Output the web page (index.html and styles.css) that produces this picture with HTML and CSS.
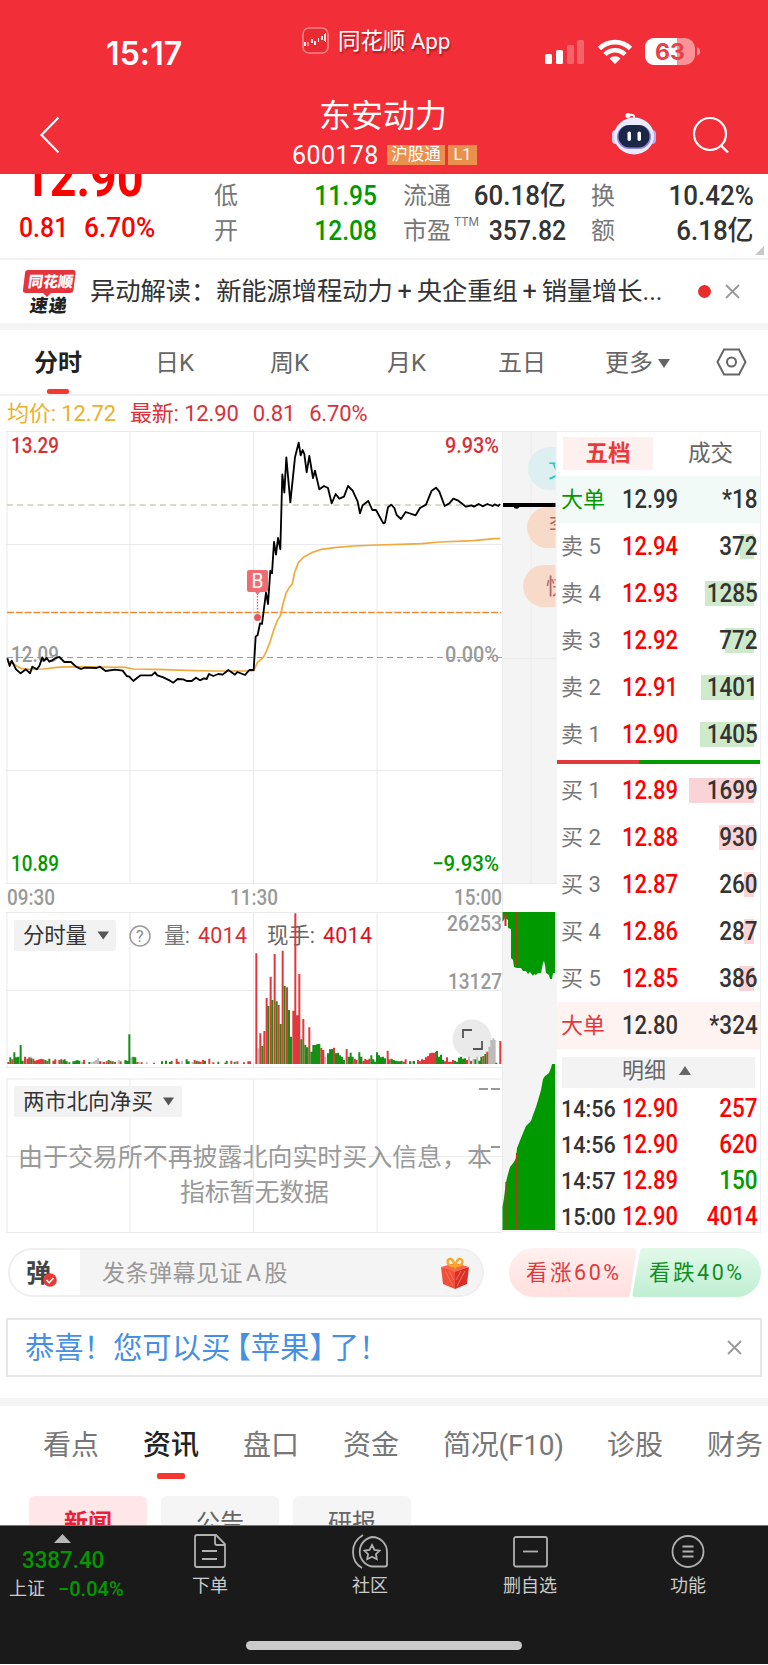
FILE: index.html
```html
<!DOCTYPE html>
<html lang="zh-CN">
<head>
<meta charset="utf-8">
<title>东安动力 600178</title>
<link rel="stylesheet" href="styles.css">
</head>
<body>
<div class="phone">
  <header class="top">
    <div class="status">
      <div class="clock">15:17</div>
      <div class="app">
        <svg width="27" height="27" viewBox="0 0 27 27"><rect x="1" y="1" width="25" height="25" rx="6" fill="#e82a33" stroke="#fa8286" stroke-width="1.6"/><g stroke="#fff" stroke-width="1.8"><path d="M3 15v4M10 12v4M13 14v4M20 9v4"/></g><g fill="none" stroke="#fff" stroke-width=".9"><path d="M6 15v4M16.500 11v4M23.500 6v9M22.600 7v7"/></g></svg>
        <span>同花顺 App</span>
      </div>
      <svg class="signals" width="158" height="30" viewBox="544 37 158 30">
        <rect x="545" y="54" width="7" height="10" rx="1.500" fill="#fff"/><rect x="556" y="50" width="7" height="14" rx="1.500" fill="#fff"/>
        <rect x="567" y="45" width="7" height="19" rx="1.500" fill="#fff" opacity=".25"/><rect x="577" y="40" width="7" height="24" rx="1.500" fill="#fff" opacity=".25"/>
        <g fill="none" stroke="#fff" stroke-width="4.600"><path d="M599.500 48.500a22 22 0 0 1 31 0M605 54.500a14 14 0 0 1 20 0"/></g><path d="M615 64l-5.500-5.500a7.800 7.800 0 0 1 11 0z" fill="#fff"/>
        <path d="M654 38h31a10 10 0 0 1 10 10v7a10 10 0 0 1-10 10h-31a9 9 0 0 1-9-9v-9a9 9 0 0 1 9-9z" fill="#fa9297"/>
        <path d="M677 38h-23a9 9 0 0 0-9 9v9a9 9 0 0 0 9 9h23z" fill="#fff"/><path d="M697 47.500q3 .5 3 4t-3 4z" fill="#fa9297"/>
        <text x="655" y="60" class="batt" textLength="30" lengthAdjust="spacingAndGlyphs">63</text>
      </svg>
    </div>
    <div class="titlebar">
      <svg class="back" width="22" height="38" viewBox="0 0 22 38"><path d="M19.500 1.500L2.500 19l17 17.500" fill="none" stroke="#fff" stroke-width="2.200"/></svg>
      <div class="stock">
        <h1>东安动力</h1>
        <div class="code"><span class="num">600178</span><span class="tag">沪股通</span><span class="tag tag-s">L1</span></div>
      </div>
      <svg class="robot" width="46" height="44" viewBox="0 0 46 44">
        <path d="M23 7V4q-1-2-5-1" fill="none" stroke="#fff" stroke-width="2"/><circle cx="17" cy="3.500" r="2.500" fill="#fff"/>
        <rect x="1" y="18" width="8" height="14" rx="4" fill="#cbd0fa"/><rect x="37" y="18" width="8" height="14" rx="4" fill="#bda6f4"/>
        <ellipse cx="23" cy="24" rx="20" ry="18.500" fill="#e9ecff"/><rect x="6" y="13" width="34" height="24" rx="12" fill="#9186e0"/><rect x="7.500" y="13" width="31" height="22.500" rx="11" fill="#1c2748"/>
        <rect x="16.500" y="19.500" width="3.500" height="9.500" rx="1.700" fill="#fff"/><rect x="26.500" y="19.500" width="3.500" height="9.500" rx="1.700" fill="#fff"/>
      </svg>
      <svg class="search" width="38" height="38" viewBox="0 0 38 38"><circle cx="18" cy="18" r="16" fill="none" stroke="#fff" stroke-width="2.200"/><path d="M29 29.500l7 7" stroke="#fff" stroke-width="2.400"/></svg>
    </div>
  </header>

  <section class="quote">
    <div class="now"><span class="price din">12.90</span><div class="chg"><span class="din">0.81</span><span class="din">6.70%</span></div></div>
    <dl class="facts">
      <dt>低</dt><dd class="down"><span class="din r">11.95</span></dd><dt>流通</dt><dd><span class="din r w">60.18亿</span></dd><dt>换</dt><dd><span class="din r w">10.42%</span></dd>
      <dt>开</dt><dd class="down"><span class="din r">12.08</span></dd><dt>市盈<sup>TTM</sup></dt><dd><span class="din r m">357.82</span></dd><dt>额</dt><dd><span class="din r w">6.18亿</span></dd>
    </dl>
    <svg class="corner" width="9" height="9" viewBox="0 0 9 9"><path d="M9 0v9H0z" fill="#c8c8c8"/></svg>
  </section>

  <section class="news">
    <svg width="54" height="46" viewBox="0 0 54 46"><path d="M5 1h46q3 0 2.500 3l-2 17q-.5 3-3.500 3H29l-4 4-4-4H4q-3.500 0-3-3L3 4q.3-3 3-3z" fill="#e4353c"/><g transform="skewX(-8)" class="express"><text x="8" y="18" fill="#fff" font-size="15" textLength="45">同花顺</text><text x="13" y="43" fill="#222" font-size="18" textLength="37">速递</text></g></svg>
    <p>异动解读：新能源增程动力<b>+</b>央企重组<b>+</b>销量增长...</p>
    <i class="dot"></i>
    <svg width="15" height="15" viewBox="0 0 15 15"><path d="M1 1l13 13M14 1L1 14" stroke="#999" stroke-width="1.800"/></svg>
  </section>

  <nav class="periods">
    <span class="on">分时</span><span>日K</span><span>周K</span><span>月K</span><span>五日</span>
    <span>更多<svg width="12" height="9" viewBox="0 0 12 9"><path d="M0 0h12L6 9z" fill="#666"/></svg></span>
    <svg width="31" height="28" viewBox="0 0 31 28"><path d="M8 1.500h15L29.500 14 23 26.500H8L1.500 14z" fill="none" stroke="#666" stroke-width="2"/><circle cx="15.500" cy="14" r="4.500" fill="none" stroke="#666" stroke-width="2"/></svg>
  </nav>

  <div class="legend"><span class="avg">均价: 12.72</span><span>最新: 12.90</span><span>0.81</span><span>6.70%</span></div>

  <main class="board">
    <svg class="charts" width="557" height="803" viewBox="0 431 557 803">
      <defs><clipPath id="strip"><rect x="502" y="431" width="53.500" height="453"/></clipPath></defs>
      <path d="M502.500 431H557V884h-54.500zM502.500 912H557v320h-54.500z" fill="#f4f4f4"/>
      <path d="M6 431.500h551M6 544.500h496M6 770.500h496M6 883.500h551M6 912.500h496M6 990.500h496M6 1067.500h496M6 1079h496M6 1156.500h496M6 1232.500h496M7 431v452M130 431v452M253.500 431v452M377 431v452M7 912v155M130 912v155M253.500 912v155M377 912v155M7 1079v153M130 1079v153M253.500 1079v153M377 1079v153" stroke="#eaeaea" fill="none"/>
      <path d="M502.500 431v801M531 431v452M503 658.500h53" stroke="#ececec" fill="none"/>
      <g clip-path="url(#strip)" class="bub">
        <rect x="528" y="447" width="70" height="43" rx="21.500" fill="#ddeff0"/><text x="548" y="477" fill="#22cfc5">文</text>
        <rect x="527" y="507" width="70" height="41" rx="20.500" fill="#f8dac8"/><text x="549" y="533" fill="#b26464">李</text>
        <rect x="523" y="565" width="70" height="42" rx="21" fill="#f8dac8"/><text x="546" y="594" fill="#b26464">快</text>
      </g>
      <path d="M7 505h494" stroke="#d0cdb8" stroke-width="1.300" stroke-dasharray="6 4.200"/>
      <path d="M7 612.500h494" stroke="#f18a35" stroke-width="1.700" stroke-dasharray="7 1.800"/>
      <path d="M7 657.500h495" stroke="#9a9a9a" stroke-width="1.200" stroke-dasharray="6 4"/>
      <g class="lab">
        <text x="11" y="452.500" fill="#d93038" textLength="48" lengthAdjust="spacingAndGlyphs">13.29</text><text x="11" y="661.500" fill="#999" textLength="48" lengthAdjust="spacingAndGlyphs">12.09</text><text x="11" y="871" fill="#090" textLength="48" lengthAdjust="spacingAndGlyphs">10.89</text>
        <text x="445" y="452.500" fill="#d93038" textLength="54" lengthAdjust="spacingAndGlyphs">9.93%</text><text x="445" y="661.500" fill="#999" textLength="54" lengthAdjust="spacingAndGlyphs">0.00%</text><text x="432" y="871" fill="#090" textLength="67" lengthAdjust="spacingAndGlyphs">−9.93%</text>
        <g fill="#999"><text x="7" y="905" textLength="48" lengthAdjust="spacingAndGlyphs">09:30</text><text x="230" y="905" textLength="48" lengthAdjust="spacingAndGlyphs">11:30</text><text x="454" y="905" textLength="48" lengthAdjust="spacingAndGlyphs">15:00</text></g>
      </g>
      <g transform="translate(0 420) scale(.33333)" fill="none" stroke-linejoin="round">
        <path stroke="#f0a93d" stroke-width="5" d="M22 725L38 728 50 738 62 745 90 748 130 747 170 742 220 740 300 741 375 742 400 747 470 748 560 751 640 753 735 753 761 752 772 728 790 712 800 692 812 660 822 628 832 602 842 585 848 555 858 520 868 502 877 492 883 460 895 428 910 412 935 398 965 388 1010 382 1060 378 1130 375 1200 373 1265 371 1320 366 1420 362 1460 358 1480 356 1500 356"/>
        <path stroke="#000" stroke-width="5.500" d="M22 715L29 738 35 722 48 748 62 760 78 748 90 760 97 740 110 748 118 738 127 712 132 722 140 714 148 725 155 722 165 715 178 711 193 726 213 726 228 740 243 747 255 743 290 744 300 740 317 753 345 749 368 752 380 768 388 770 400 783 410 775 422 766 455 766 465 757 472 766 490 772 510 782 520 788 533 777 550 778 560 783 575 783 588 773 600 781 612 775 620 777 627 762 640 768 655 762 668 764 685 750 705 764 712 756 735 765 748 750 761 750L767 650 773 645 780 610 786 612 792 565 798 518 804 552 811 452 816 460 822 366 828 404 834 354 841 388 847 163 853 218 859 112 871 247 885 112 896 68 902 106 908 90 913 102 920 157 928 108 939 174 945 152 958 208 972 198 984 204 995 250 1007 222 1018 236 1032 230 1044 198 1058 212 1073 245 1080 280 1088 256 1105 243 1117 270 1128 270 1150 310 1155 308 1164 262 1174 254 1183 264 1190 285 1203 297 1217 276 1247 286 1260 264 1278 254 1295 212 1308 203 1318 215 1334 258 1348 250 1360 236 1375 242 1398 260 1415 256 1422 260 1436 252 1448 259 1462 252 1478 258 1484 253 1495 258 1500 252"/>
      </g>
      <path d="M503 505h52.500" stroke="#000" stroke-width="4"/><circle cx="516.500" cy="506" r="2.800"/>
      <path d="M257.500 593v21" stroke="#e0606a" stroke-width="1.300" stroke-dasharray="1.500 1.500"/><circle cx="257.500" cy="617.500" r="3.500" fill="#e85560"/>
      <path d="M249 570h17q2 0 2 2v18q0 2-2 2h-6l-2.500 3-2.500-3h-6q-2 0-2-2v-18q0-2 2-2z" fill="#ef6d70"/><text x="251.500" y="588" class="bmark" textLength="12" lengthAdjust="spacingAndGlyphs">B</text>

      <rect x="14" y="920" width="102" height="31" rx="2" fill="#f2f2f2"/><text x="23" y="943" class="sel" textLength="64">分时量</text><path d="M97.500 931.500h11.500l-5.750 8z" fill="#555"/>
      <circle cx="140" cy="936" r="10" fill="none" stroke="#999" stroke-width="1.500"/><text x="136" y="942" class="q">?</text>
      <g class="vh"><text x="164" y="943" fill="#777" textLength="26">量:</text><text x="198" y="943" fill="#d93038" textLength="49">4014</text><text x="267" y="943" fill="#666" textLength="48">现手:</text><text x="323" y="943" fill="#e01020" textLength="49">4014</text></g>
      <g class="lab" fill="#999"><text x="447" y="930.500" textLength="55" lengthAdjust="spacingAndGlyphs">26253</text><text x="448" y="988.500" textLength="54" lengthAdjust="spacingAndGlyphs">13127</text></g>
      <circle cx="472" cy="1039" r="19.500" fill="#e6e6e6" opacity=".85"/><path d="M463 1038v-8h9M482 1041v8h-9" fill="none" stroke="#555" stroke-width="1.800"/>

      <g transform="translate(0 870) scale(.33333)" fill="none" stroke-width="6">
        <path stroke="#bbb" d="M92 582V560M246 582V576M275 582V576M282 582V574M288 582V570M294 582V565M306 582V574M356 582V570M394 582V562M418 582V575M440 582V577M546 582V574M578 582V576M775 582V535M976 582V560M1236 582V574M1267 582V566M1407 582V560M1420 582V566M1432 582V560M1468 582V530M1474 582V510M1480 582V505M1484 582V510"/>
        <path stroke="#e2383c" d="M25 582V576M37 582V568M75 582V560M82 582V566M88 582V562M100 582V566M106 582V572M112 582V570M118 582V568M124 582V566M130 582V568M142 582V572M160 582V572M166 582V568M178 582V570M190 582V570M252 582V570M300 582V574M312 582V576M320 582V574M332 582V572M345 582V576M362 582V574M412 582V576M425 582V577M462 582V578M515 582V572M530 582V566M536 582V575M584 582V570M596 582V574M602 582V575M609 582V570M628 582V566M640 582V577M676 582V578M694 582V572M712 582V574M732 582V577M745 582V574M750 582V574M769 582V250M781 582V490M793 582V483M800 582V384M812 582V320M824 582V252M836 582V405M848 582V242M861 582V352M880 582V422M886 582V130M892 582V436M898 582V312M910 582V447M928 582V472M964 582V534M970 582V540M1002 582V533M1040 582V537M1064 582V566M1070 582V570M1090 582V572M1096 582V566M1102 582V570M1108 582V566M1163 582V542M1169 582V568M1211 582V575M1217 582V568M1254 582V570M1260 582V574M1266 582V568M1272 582V570M1278 582V562M1284 582V558M1290 582V550M1296 582V548M1302 582V548M1308 582V546M1335 582V574M1341 582V562M1347 582V575M1353 582V575M1359 582V570M1401 582V570M1413 582V572M1450 582V558M1462 582V545M1501 582V513"/>
        <path stroke="#149014" d="M31 582V562M43 582V547M49 582V562M55 582V560M62 582V525M68 582V572M94 582V565M136 582V570M148 582V566M184 582V568M194 582V568M200 582V574M208 582V577M220 582V574M226 582V572M232 582V570M238 582V572M268 582V576M326 582V570M338 582V574M376 582V570M382 582V572M388 582V493M400 582V560M406 582V562M486 582V574M498 582V572M510 582V576M560 582V568M566 582V574M590 582V572M615 582V572M655 582V575M680 582V572M704 582V575M787 582V528M805 582V408M817 582V390M830 582V394M842 582V462M854 582V348M867 582V420M873 582V500M904 582V508M916 582V524M922 582V532M934 582V545M940 582V525M946 582V525M952 582V522M958 582V522M984 582V550M990 582V538M996 582V537M1008 582V550M1014 582V548M1020 582V556M1026 582V560M1032 582V570M1046 582V560M1052 582V548M1058 582V560M1078 582V547M1084 582V560M1114 582V556M1120 582V568M1126 582V575M1131 582V547M1137 582V556M1143 582V562M1149 582V560M1155 582V565M1175 582V566M1181 582V570M1187 582V572M1193 582V574M1199 582V574M1205 582V572M1230 582V574M1242 582V573M1311 582V543M1317 582V560M1323 582V554M1329 582V570M1365 582V572M1371 582V575M1377 582V563M1383 582V560M1389 582V566M1395 582V565M1426 582V568M1438 582V572M1444 582V560M1456 582V552M1489 582V578"/>
      </g>
      <path d="M502.500 912H555V973L553 973 552 979 550 979 549 975 546 973 545 965 544 961 543 963 541 973 538 973 536 975 534 974 533 976 530 972 528 974 526 971 523 971 521 968 517 968 514 967 513 960 511 958 511 929 508 928 508 920 505 918 502.500 922z" fill="#090"/>
      <path d="M502.500 1230V1207L504 1198 506 1182 508 1174 510 1167 514 1162 516 1158 517 1148 521 1138 523 1133 526 1126 531 1121 533 1115 536 1107 539 1097 541 1090 543 1079 545 1076 549 1073 551 1068 552 1064H555V1230z" fill="#090"/>
      <path d="M516.500 912v53M516.500 1230v-77M506 1230v-48" stroke="#b33c18" stroke-width="1.200"/><path d="M505.500 914v12" stroke="#e22" stroke-width="2"/>

      <rect x="14" y="1086" width="168" height="31" rx="2" fill="#f2f2f2"/><text x="23" y="1109" class="sel" textLength="130">两市北向净买</text><path d="M163 1097.500h11l-5.500 8z" fill="#555"/>
      <path d="M479 1089h9M491 1089h9M491 1147h9" stroke="#999" stroke-width="2"/>
      <g class="note"><text x="18" y="1166" textLength="474">由于交易所不再披露北向实时买入信息，本</text><text x="180" y="1201" textLength="149">指标暂无数据</text></g>
    </svg>

    <aside class="depth">
      <div class="dtabs"><b>五档</b><span>成交</span></div>
      <div class="row big sell"><span>大单</span><em class="din">12.99</em><strong><u class="din r">*18</u></strong></div>
      <div class="row s"><span>卖 5</span><em class="din">12.94</em><strong style="--w:14px"><u class="din r">372</u></strong></div>
      <div class="row s"><span>卖 4</span><em class="din">12.93</em><strong style="--w:49px"><u class="din r">1285</u></strong></div>
      <div class="row s"><span>卖 3</span><em class="din">12.92</em><strong style="--w:29px"><u class="din r">772</u></strong></div>
      <div class="row s"><span>卖 2</span><em class="din">12.91</em><strong style="--w:53px"><u class="din r">1401</u></strong></div>
      <div class="row s"><span>卖 1</span><em class="din">12.90</em><strong style="--w:54px"><u class="din r">1405</u></strong></div>
      <div class="ratio"><i></i></div>
      <div class="row b"><span>买 1</span><em class="din">12.89</em><strong style="--w:65px"><u class="din r">1699</u></strong></div>
      <div class="row b"><span>买 2</span><em class="din">12.88</em><strong style="--w:35px"><u class="din r">930</u></strong></div>
      <div class="row b"><span>买 3</span><em class="din">12.87</em><strong style="--w:10px"><u class="din r">260</u></strong></div>
      <div class="row b"><span>买 4</span><em class="din">12.86</em><strong style="--w:10px"><u class="din r">287</u></strong></div>
      <div class="row b"><span>买 5</span><em class="din">12.85</em><strong style="--w:15px"><u class="din r">386</u></strong></div>
      <div class="row big buy"><span>大单</span><em class="din">12.80</em><strong><u class="din r">*324</u></strong></div>
      <div class="detail">明细<svg width="12" height="9" viewBox="0 0 12 9"><path d="M0 9h12L6 0z" fill="#666"/></svg></div>
      <div class="row t"><span class="din">14:56</span><em class="din">12.90</em><strong class="up"><u class="din r">257</u></strong></div>
      <div class="row t"><span class="din">14:56</span><em class="din">12.90</em><strong class="up"><u class="din r">620</u></strong></div>
      <div class="row t"><span class="din">14:57</span><em class="din">12.89</em><strong class="down"><u class="din r">150</u></strong></div>
      <div class="row t"><span class="din">15:00</span><em class="din">12.90</em><strong class="up"><u class="din r">4014</u></strong></div>
    </aside>
  </main>

  <section class="talk">
    <div class="pill">
      <div class="dan"><b>弹</b><svg width="14" height="14" viewBox="0 0 14 14"><circle cx="7" cy="7" r="6.800" fill="#e93a35"/><path d="M3.500 7l2.600 2.700 4.400-4.600" fill="none" stroke="#fff" stroke-width="1.600"/></svg></div>
      <span>发条弹幕见证<b>A</b>股</span>
      <svg class="gift" width="30" height="32" viewBox="0 0 30 32"><path d="M1 10l14 4v18L3 27z" fill="#f0503a"/><path d="M29 10l-14 4v18l12-5z" fill="#d92f28"/><path d="M1 10l14-4 14 4-14 5z" fill="#f8694a"/><path d="M5 14l8 15M9 14l5 9M25 14l-8 15M21 14l-5 9" stroke="#f4735a" stroke-width="1"/><path d="M15 9Q6 9 8 3q4-4 7 6 3-10 7-6 2 6-7 6z" fill="none" stroke="#f6a82c" stroke-width="2.400"/></svg>
    </div>
    <div class="votes">
      <svg width="252" height="49" viewBox="0 0 252 49"><defs><linearGradient id="vr" x2="0" y2="1"><stop stop-color="#fff0ef"/><stop offset="1" stop-color="#ffe0de"/></linearGradient><linearGradient id="vg" x2="0" y2="1"><stop stop-color="#e2f9ea"/><stop offset="1" stop-color="#c0efd2"/></linearGradient></defs>
        <path d="M24.500 0H125q3 0 2.500 3L121 46q-.5 3-3 3H24.500a24.500 24.500 0 0 1 0-49z" fill="url(#vr)"/><path d="M135 0h92.500a24.500 24.500 0 0 1 0 49H126q-3 0-2.500-3L131 3q.5-3 4-3z" fill="url(#vg)"/>
        <g class="vt"><text x="17" y="32" fill="#e0393f" textLength="93">看涨60%</text><text x="140" y="32" fill="#0c8f1c" textLength="93">看跌40%</text></g></svg>
    </div>
  </section>

  <section class="promo"><span>恭喜！您可以买<i class="lb">【</i>苹果<i class="rb">】</i>了！</span><svg width="15" height="15" viewBox="0 0 15 15"><path d="M1 1l13 13M14 1L1 14" stroke="#999" stroke-width="1.800"/></svg></section>

  <nav class="infos"><span>看点</span><span class="on">资讯</span><span>盘口</span><span>资金</span><span class="wide">简况(F10)</span><span>诊股</span><span>财务</span></nav>
  <div class="chips"><b>新闻</b><span>公告</span><span>研报</span></div>

  <footer class="bar">
    <div class="items">
      <div class="index">
        <svg width="17" height="9" viewBox="0 0 17 9"><path d="M0 9h17L8.500 0z" fill="#b8b8b8"/></svg>
        <div class="pt"><span class="din">3387.40</span></div>
        <div class="pc">上证<span>−0.04%</span></div>
      </div>
      <div class="item"><svg width="34" height="36" viewBox="0 0 34 36"><path d="M2 4q0-2 2-2h19l9 9v21q0 2-2 2H4q-2 0-2-2zM22 2v8q0 2 2 2h8M9 18h15M9 26h15"/></svg>下单</div>
      <div class="item"><svg width="38" height="36" viewBox="0 0 38 36"><path d="M21 4a15 15 0 0 0 0 29.500h13q2 0 2-2V19A15 15 0 0 0 21 4zM12 2Q2 8 2 19t9 16M21 12l2.500 5 5 .7-3.600 3.500.9 5-4.800-2.500-4.800 2.500.9-5-3.600-3.500 5-.7z"/></svg>社区</div>
      <div class="item"><svg width="36" height="36" viewBox="0 0 36 36"><rect x="2" y="4" width="33" height="29.500" rx="2"/><path d="M11 18.500h15"/></svg>删自选</div>
      <div class="item"><svg width="34" height="36" viewBox="0 0 34 36"><circle cx="17" cy="18.500" r="15.500"/><path d="M11.500 13.500h11M11.500 18.500h11M11.500 23.500h11"/></svg>功能</div>
    </div>
    <div class="home"></div>
  </footer>
</div>
</body>
</html>
```
FILE: styles.css
```css
* { box-sizing: border-box; }
body { margin: 0; background: #fff; font-family: Roboto, "Noto Sans CJK SC", sans-serif; color: #333; }
.phone { width: 768px; height: 1665px; overflow: hidden; display: flex; flex-direction: column; position: relative; }
.phone > * { flex: none; }
.phone svg { display: block; flex: none; }
i, em { font-style: normal; }
u { text-decoration: none; }
h1, p, dl, dd { margin: 0; font-weight: 400; }
.din { display: inline-block; font-family: Roboto, "Noto Sans CJK SC", sans-serif; transform: scaleX(.88); transform-origin: left center; white-space: nowrap; }
.din.r { transform-origin: right center; }
.up { color: #f00; }
.down { color: #090; }

.top { height: 174px; background: #f22f38; color: #fff; position: relative; z-index: 1; }
.status { height: 82px; display: flex; padding-left: 106px; }
.clock { width: 196px; padding-top: 35px; font: 600 32px/38px Inter, sans-serif; letter-spacing: .1px; }
.app { width: 242px; display: flex; gap: 9px; padding-top: 27px; font-size: 22.500px; line-height: 28px; text-shadow: 1px 2px 2px rgba(90,0,0,.5); white-space: nowrap; letter-spacing: -.1px; }
.signals { margin-top: 37px; }
.batt { font: 700 23px Inter, sans-serif; fill: #e8404a; }
.titlebar { height: 92px; display: flex; align-items: flex-start; }
.back { margin: 34px 0 0 39px; }
.stock { width: 292px; margin-left: 231px; margin-right: 27px; display: flex; flex-direction: column; align-items: flex-start; }
.stock h1 { font-size: 32px; line-height: 40px; margin: 14px 0 0 27px; }
.code { display: flex; align-items: center; height: 28px; margin-top: 5px; }
.num { font-size: 25px; letter-spacing: .4px; width: 95px; }
.tag { background: #e8904c; font-size: 16.500px; line-height: 20px; height: 20px; width: 58px; text-align: center; margin-right: 3px; }
.tag-s { width: 29px; }
.robot { margin-top: 30px; }
.search { margin: 34px 0 0 35px; }

.quote { height: 86px; border-bottom: 2px solid #f0f0f0; display: flex; position: relative; }
.now { width: 214px; color: #f00; padding-left: 19px; }
.price { font-size: 53px; font-weight: 700; line-height: 60px; margin: -26px 0 0 4px; height: 60px; display: block; }
.chg { display: flex; font-size: 27px; line-height: 32px; font-weight: 500; margin-top: 4px; }
.chg .din { transform: scaleX(.92); }
.chg .din + .din { margin-left: 11px; transform: scaleX(.97); }
.facts { display: grid; grid-template-columns: 60px 103px 86px 103px 85px 103px; align-items: center; grid-template-rows: 35px 35px; margin-top: 4px; height: 70px; }
.facts dt { font-size: 24px; color: #777; white-space: nowrap; line-height: 34px; }
.facts dt:nth-of-type(3n+2) { padding-left: 26px; }
.facts dt:nth-of-type(3n) { padding-left: 25px; }
.facts dd { display: flex; justify-content: flex-end; align-items: center; font-size: 27px; font-weight: 500; line-height: 34px; }
.facts dd .din { transform: scaleX(.91); }
.facts dd .w { transform: scaleX(.96); }
.facts dd .m { transform: scaleX(.92); }
.facts sup { font-size: 12px; line-height: 0; margin-left: 3px; vertical-align: 13px; }
.corner { position: absolute; right: 4px; bottom: 3px; }

.news { height: 63px; display: flex; align-items: center; padding-left: 22px; }
.express text { font-weight: 900; font-family: "Noto Sans CJK SC", sans-serif; }
.news p { font-size: 25.300px; margin: -5px 0 0 14px; width: 608px; white-space: nowrap; letter-spacing: -.07px; }
.news b { display: inline-block; width: 24px; text-align: center; font-weight: 400; }
.dot { width: 13px; height: 13px; border-radius: 50%; background: #e82d2f; margin-right: 14px; }

.periods { height: 73px; border-top: 7px solid #f4f4f4; border-bottom: 2px solid #f0f0f0; display: grid; grid-template-columns: 121px 115px 117px 111px 107px 111px 40px; padding-left: 34px; font-size: 24px; line-height: 64px; color: #666; }
.periods span { display: flex; align-items: center; gap: 5px; padding-top: 1px; }
.periods > svg { margin-top: 18px; }
.periods .on { color: #222; font-weight: 700; position: relative; }
.periods .on::after { content: ""; position: absolute; left: 13px; bottom: 1px; width: 22px; height: 5px; border-radius: 2px; background: #f5382f; }
.legend { height: 35px; display: flex; gap: 14px; padding: 0 7px; font-size: 22px; line-height: 36px; color: #d8313a; white-space: nowrap; letter-spacing: -.13px; }
.legend .avg { color: #ecb02c; }

.board { display: flex; height: 803px; }
.charts text { font-family: Roboto, "Noto Sans CJK SC", sans-serif; }
.lab text { font-size: 21.500px; font-weight: 500; }
.charts .bmark { font: 20px Roboto, sans-serif; fill: #fff; }
.bub text { font-size: 22px; }
.sel { font-size: 21.500px; fill: #333; }
.q { font-size: 16px; fill: #888; }
.vh text { font-size: 21.500px; }
.note text { font-size: 25px; fill: #999; }

.depth { width: 204px; height: 802px; border: solid #eee; border-width: 1px 1px 1px 0; overflow: hidden; }
.dtabs { height: 44px; display: flex; padding: 5px 0 0 6px; font-size: 22.500px; line-height: 33px; color: #666; }
.dtabs b { width: 90px; height: 33px; background: #fef0ef; color: #e83a38; text-align: center; }
.dtabs span { margin-left: 35px; }
.row { height: 47px; display: flex; align-items: center; padding: 0 3px 0 4px; font-size: 25px; line-height: 47px; }
.row > span { width: 61px; font-size: 22px; color: #777; white-space: nowrap; }
.row em { width: 60px; color: #f00; font-weight: 500; }
.row strong { flex: 1; text-align: right; font-weight: 500; background: linear-gradient(var(--c), var(--c)) right 3px center / var(--w, 0) 25px no-repeat; margin-left: -10px; }
.row strong .din { transform: scaleX(.9); margin-right: -1px; }
.s { --c: #cdeacb; }
.b { --c: #fad3d6; }
.row.big em { color: #333; }
.big.sell { background: #f1faf7; }
.big.sell > span { color: #090; }
.big.buy { background: #fff3f1; }
.big.buy > span { color: #e2393f; }
.ratio { margin: 2px 0 3px; height: 4px; background: #090; }
.ratio i { display: block; height: 4px; width: 82px; background: #e2393c; }
.detail { margin: 8px 5px 3px; height: 31px; background: #f3f3f3; display: flex; align-items: center; padding-left: 60px; gap: 13px; font-size: 22px; line-height: 27px; padding-bottom: 4px; color: #666; }
.row.t { height: 36px; line-height: 36px; }
.row.t > span { font-size: 24.500px; color: #333; font-weight: 500; }

.talk { display: flex; padding: 14px 7px 0 8px; height: 83px; }
.pill { width: 476px; height: 49px; border: 2px solid #efefef; border-radius: 25px; background: #f4f4f4; display: flex; align-items: center; overflow: hidden; font-size: 23px; color: #999; }
.dan { width: 70px; height: 49px; background: #fff; display: flex; align-items: center; padding: 0 0 3px 16px; color: #444; }
.dan b { font-size: 25px; font-weight: 700; }
.dan svg { margin: 17px 0 0 -8px; }
.pill > span { width: 360px; padding: 0 0 3px 22px; letter-spacing: .5px; }
.pill > span b { font-weight: 400; margin: 0 3px; }
.votes { margin-left: 25px; }
.vt { font-size: 21.500px; }

.promo { margin: 1px 6px 0; height: 59px; border: 2px solid #e6e6e6; display: flex; align-items: center; justify-content: space-between; padding: 0 18px 0 17px; font-size: 29.400px; color: #4590e4; white-space: nowrap; }
.promo span { padding-bottom: 5px; letter-spacing: -.05px; }
.lb { margin-left: -9px; }
.rb { margin-right: -9px; }

.infos { margin-top: 21px; height: 98px; border-top: 8px solid #f4f4f4; display: flex; gap: 44px; padding-left: 43px; font-size: 28px; line-height: 80px; color: #777; white-space: nowrap; }
.infos span { width: 56px; }
.infos .wide { width: 120px; letter-spacing: -.2px; }
.infos .on { color: #222; font-weight: 500; position: relative; }
.infos .on::after { content: ""; position: absolute; left: 14px; top: 67px; width: 28px; height: 6px; border-radius: 2px; background: #f5382f; }
.chips { height: 29px; display: flex; gap: 14px; padding-left: 29px; font-size: 24px; line-height: 55px; overflow: hidden; text-align: center; color: #666; }
.chips > * { width: 118px; height: 50px; border-radius: 6px; background: #f5f5f5; }
.chips b { background: #ffe6e8; color: #e8203a; }

.bar { height: 139px; background: #1a1a1a; color: #ccc; border-top: 1px solid #777; }
.items { height: 115px; display: grid; grid-template-columns: 130px 160px 160px 160px 156px; }
.index { padding: 8px 0 0 9px; }
.index svg { margin-left: 45px; }
.pt { color: #090; font-size: 24.500px; font-weight: 500; line-height: 30px; padding-left: 13px; margin-top: 2px; }
.pt .din { transform: scaleX(.91); }
.pc { font-size: 18px; line-height: 24px; display: flex; gap: 13px; margin-top: 2px; white-space: nowrap; }
.pc span { color: #090; font-size: 20px; font-weight: 500; }
.item { display: flex; flex-direction: column; align-items: center; font-size: 18px; line-height: 26px; padding-top: 7px; }
.item svg { fill: none; stroke: #b0b0b0; stroke-width: 1.800; margin-bottom: 4px; }
.home { width: 276px; height: 9px; border-radius: 5px; background: #cacaca; margin-left: 246px; }
```
